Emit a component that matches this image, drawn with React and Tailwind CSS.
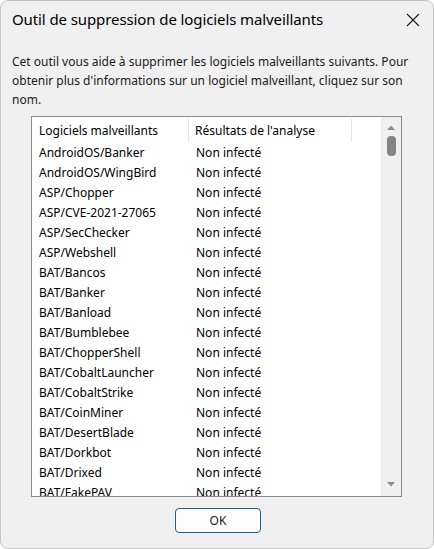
import React from "react";

const rows = [
  "AndroidOS/Banker",
  "AndroidOS/WingBird",
  "ASP/Chopper",
  "ASP/CVE-2021-27065",
  "ASP/SecChecker",
  "ASP/Webshell",
  "BAT/Bancos",
  "BAT/Banker",
  "BAT/Banload",
  "BAT/Bumblebee",
  "BAT/ChopperShell",
  "BAT/CobaltLauncher",
  "BAT/CobaltStrike",
  "BAT/CoinMiner",
  "BAT/DesertBlade",
  "BAT/Dorkbot",
  "BAT/Drixed",
  "BAT/FakePAV",
];

export default function App() {
  return (
    <div className="w-[434px] h-[549px] bg-white" style={{ fontFamily: '"Noto Sans", "Open Sans", sans-serif' }}>
      <div className="w-full h-full rounded-[8px] border border-[#c4c4c4] bg-[#f0f0f0] flex flex-col overflow-hidden text-[#000]">
        {/* title bar */}
        <div className="h-[37px] flex items-center justify-between pl-[11px] pr-[13px] shrink-0">
          <span className="text-[15px] leading-none tracking-[-0.1px]">Outil de suppression de logiciels malveillants</span>
          <svg width="14" height="14" viewBox="0 0 14 14" className="mt-[1px]">
            <path d="M1 1 L13 13 M13 1 L1 13" stroke="#1a1a1a" strokeWidth="1.1" fill="none" />
          </svg>
        </div>
        {/* description */}
        <div className="px-[11px] pt-[14px] text-[12px] leading-[19px] text-[#1a1a1a]">
          Cet outil vous aide à supprimer les logiciels malveillants suivants. Pour obtenir plus d'informations sur un logiciel malveillant, cliquez sur son nom.
        </div>
        {/* list */}
        <div className="ml-[30px] mr-[31px] mt-[7px] h-[381px] border border-[#8a8a8a] bg-white flex overflow-hidden shrink-0">
          <div className="flex-1 flex flex-col text-[12px] overflow-hidden">
            <div className="h-[26px] flex items-stretch shrink-0 pt-[2px] pb-[1px]">
              <div className="w-[157px] pl-[7px] flex items-center border-r border-[#e5e5e5]">Logiciels malveillants</div>
              <div className="w-[163px] pl-[6px] flex items-center border-r border-[#e5e5e5]">Résultats de l'analyse</div>
            </div>
            {rows.map((r) => (
              <div key={r} className="h-[20px] flex items-center shrink-0">
                <div className="w-[157px] pl-[7px]">{r}</div>
                <div className="pl-[7px]">Non infecté</div>
              </div>
            ))}
          </div>
          {/* scrollbar */}
          <div className="w-[20px] bg-[#f0f0f0] flex flex-col items-center shrink-0">
            <svg width="10" height="7" viewBox="0 0 10 7" className="mt-[7px]">
              <path d="M1 6 L5 1.5 L9 6 Z" fill="#8b8b8b" />
            </svg>
            <div className="mt-[5px] w-[9px] h-[20px] rounded-[4px] bg-[#858585]" />
            <div className="flex-1" />
            <svg width="10" height="7" viewBox="0 0 10 7" className="mb-[8px]">
              <path d="M1 1 L5 5.5 L9 1 Z" fill="#8b8b8b" />
            </svg>
          </div>
        </div>
        {/* button */}
        <div className="flex justify-center pt-[11px]">
          <button className="w-[86px] h-[25px] rounded-[4px] border border-[#1b5f9e] bg-[#fdfdfd] text-[12px] text-[#1a1a1a] ml-[2px]">
            OK
          </button>
        </div>
      </div>
    </div>
  );
}
